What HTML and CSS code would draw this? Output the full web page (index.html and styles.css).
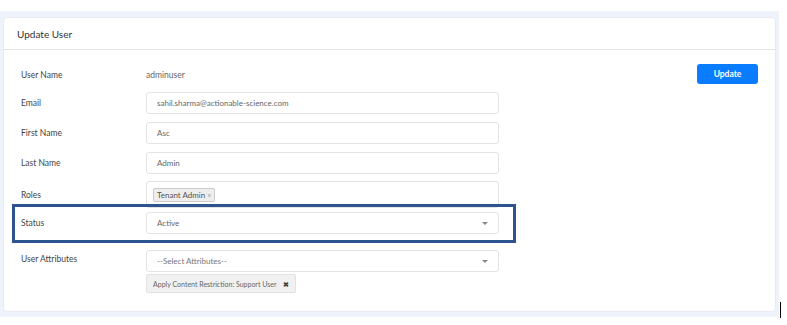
FILE: index.html
```html
<!DOCTYPE html>
<html>
<head>
    <title>Update User</title>
    <link rel="stylesheet" href="styles.css">
</head>
<body>
    <div class="page">
        <div class="card">
            <div class="card-header">Update User</div>
            <div class="card-body">
                <form class="user-form">
                    <div class="form-row row-static">
                        <label>User Name</label>
                        <div class="value">adminuser</div>
                    </div>
                    <div class="form-row">
                        <label>Email</label>
                        <div class="field">sahil.sharma@actionable-science.com</div>
                    </div>
                    <div class="form-row">
                        <label>First Name</label>
                        <div class="field">Asc</div>
                    </div>
                    <div class="form-row row-last">
                        <label>Last Name</label>
                        <div class="field">Admin</div>
                    </div>
                    <div class="form-row row-roles">
                        <label>Roles</label>
                        <div class="field field-tags">
                            <span class="tag">Tenant Admin <span class="tag-x">×</span></span>
                        </div>
                    </div>
                    <div class="form-row row-status">
                        <label>Status</label>
                        <div class="field field-select">Active <span class="caret"></span></div>
                    </div>
                    <div class="form-row row-attrs">
                        <label>User Attributes</label>
                        <div class="attrs">
                            <div class="field field-select placeholder">--Select Attributes-- <span class="caret"></span></div>
                            <span class="attr-tag">Apply Content Restriction: Support User <b>✖</b></span>
                        </div>
                    </div>
                </form>
                <button type="button" class="btn-update">Update</button>
            </div>
        </div>
    </div>
    <div class="highlight"></div>
    <div class="cursor-line"></div>
</body>
</html>
```

FILE: styles.css
```css
body { margin: 0; background: #fff; font-family: "Lato", "Liberation Sans", sans-serif; position: relative; width: 787px; height: 325px; overflow: hidden; }
.page { margin-top: 11px; width: 779px; background: #edf2fb; padding: 6px 3px 5px 3px; box-sizing: border-box; }
.card { background: #fff; border: 1px solid #e6ebf3; border-radius: 4px; height: 295px; box-sizing: border-box; }
.card-header { height: 31px; line-height: 32px; padding-left: 13px; font-size: 10px; color: #333; border-bottom: 1px solid #e4e4e4; }
.card-body { display: flex; justify-content: space-between; padding: 15px 17px 0 17px; }
.user-form { width: 478px; }
.form-row { display: flex; align-items: center; margin-bottom: 8px; }
.form-row label { width: 125px; flex-shrink: 0; font-size: 8.5px; color: #444; }
.row-static { height: 20px; margin-bottom: 7px; }
.row-last { margin-bottom: 7px; }
.row-roles { margin-bottom: 4px; }
.row-status { margin-bottom: 16px; }
.row-attrs { align-items: flex-start; }
.row-attrs label { padding-top: 4px; }
.value { font-size: 8.5px; color: #666; }
.field { position: relative; width: 353px; height: 22px; box-sizing: border-box; border: 1px solid #e3e3e3; border-radius: 3px; padding-left: 10px; font-size: 8px; color: #666; line-height: 20px; }
.field-tags { height: 27px; padding-left: 6px; padding-top: 6px; line-height: normal; }
.tag { display: inline-block; background: #eee; border: 1px solid #ccc; border-radius: 2px; padding: 1px 3px; font-size: 8px; color: #555; }
.tag-x { color: #999; font-size: 7px; }
.caret { position: absolute; right: 10px; top: 9px; border-left: 3px solid transparent; border-right: 3px solid transparent; border-top: 3px solid #888; }
.placeholder { color: #777; }
.attrs { display: flex; flex-direction: column; align-items: flex-start; }
.attr-tag { margin-top: 2px; background: #f1f1f1; border: 1px solid #e2e2e2; border-radius: 2px; padding: 0 6px; height: 19px; line-height: 18px; box-sizing: border-box; font-size: 7px; color: #666; }
.attr-tag b { color: #444; margin-left: 5px; font-size: 6.5px; }
.btn-update { margin-top: -1px; width: 61px; height: 20px; background: #0a7cff; color: #fff; border: none; border-radius: 3px; font-family: inherit; font-size: 8.5px; font-weight: bold; cursor: pointer; }
.highlight { position: absolute; left: 12px; top: 204px; width: 504px; height: 39px; box-sizing: border-box; border: 3px solid #2f5391; }
.cursor-line { position: absolute; left: 780px; top: 302px; width: 1px; height: 16px; background: #000; }
```
